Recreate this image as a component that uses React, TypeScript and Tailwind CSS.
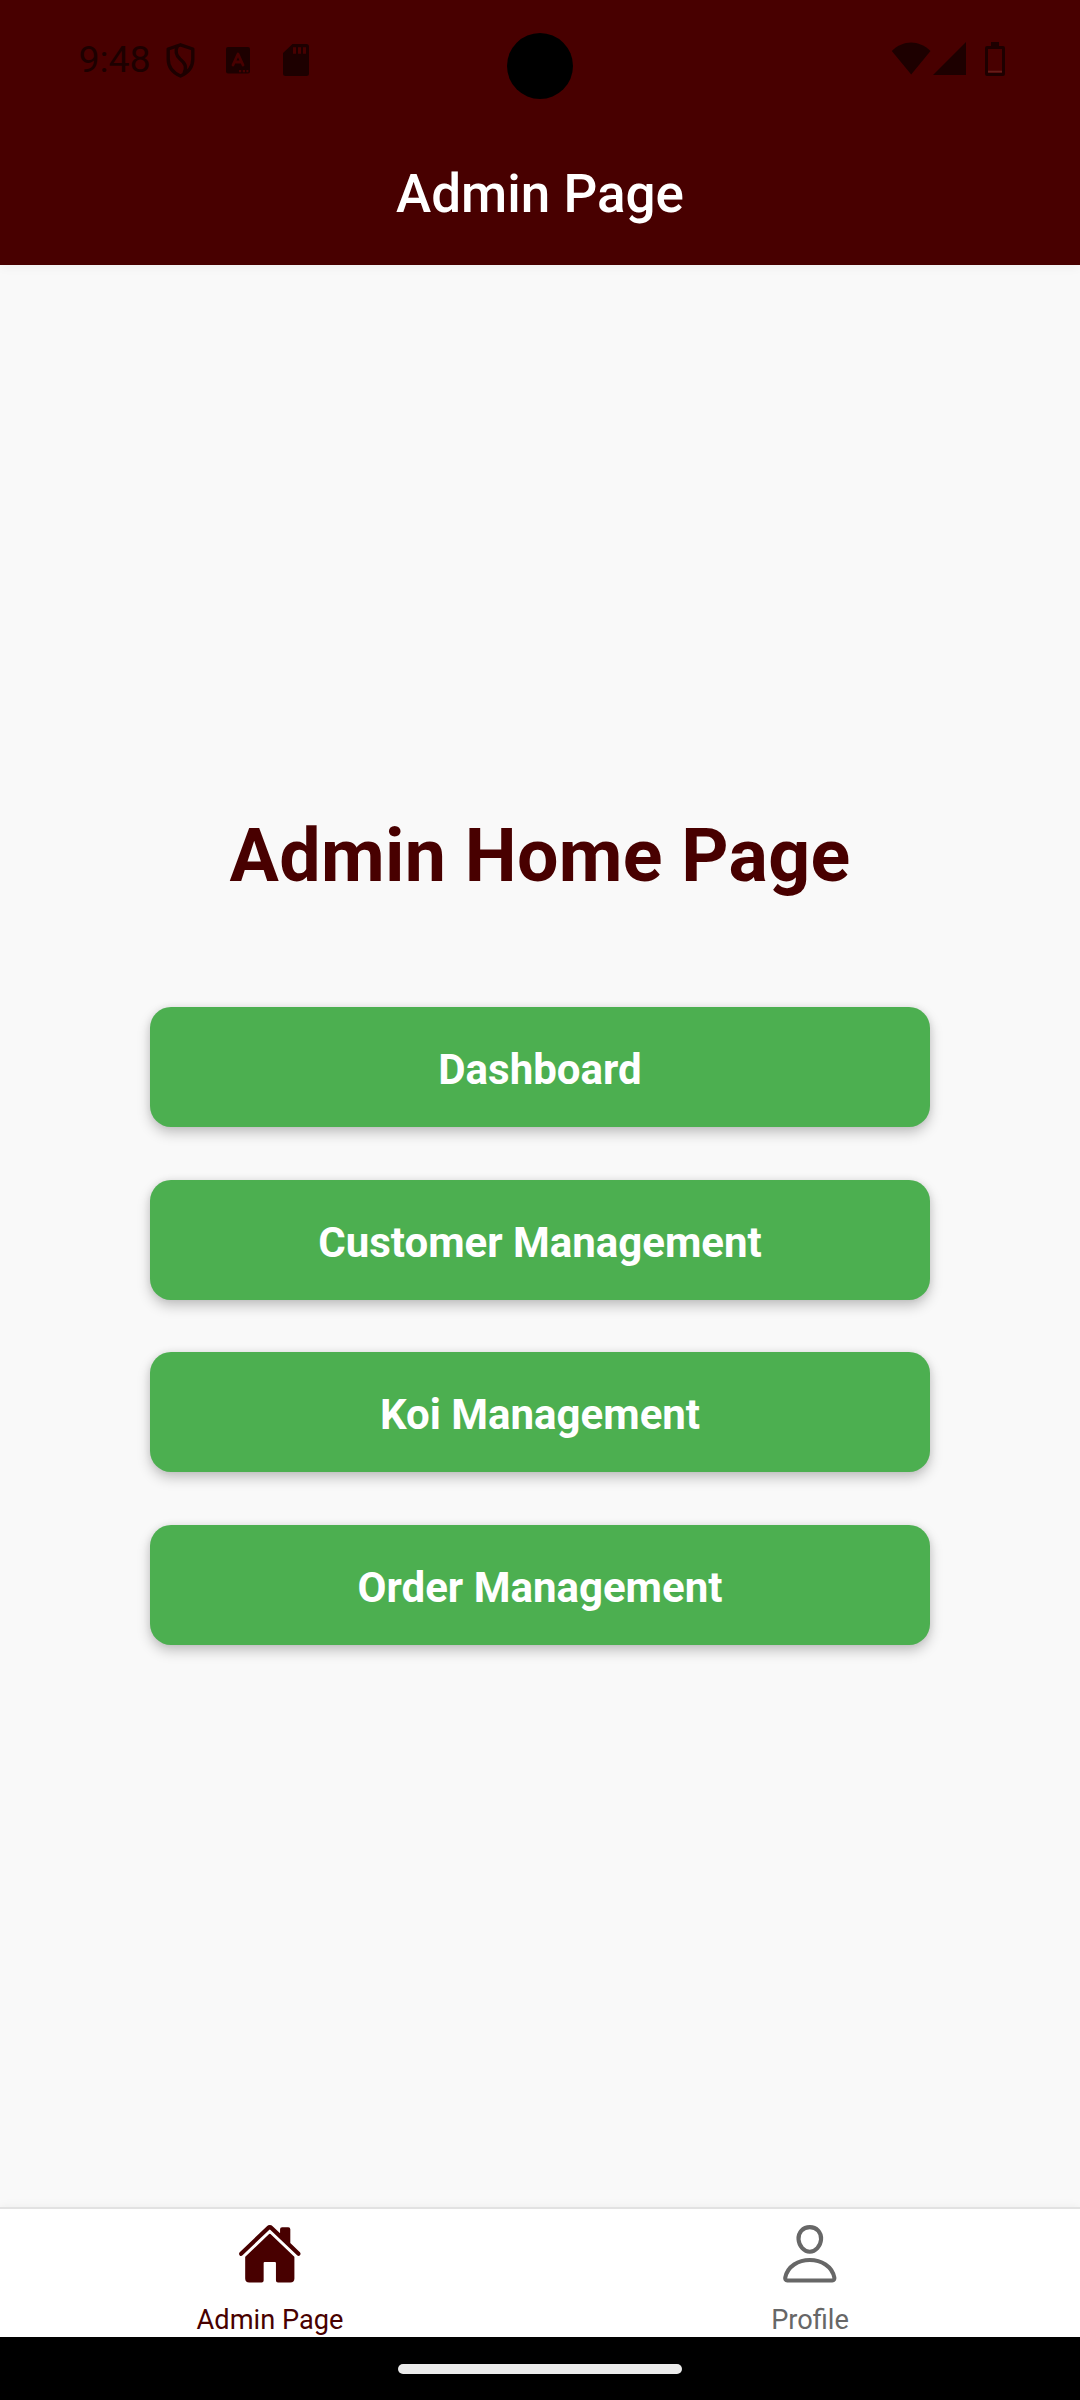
import { IoHome, IoPersonOutline } from "react-icons/io5";

const actions = ["Dashboard", "Customer Management", "Koi Management", "Order Management"];

function StatusBar() {
  return (
    <div className="relative flex h-[118px] w-full items-start justify-between text-[#1d0000]">
      <div className="flex pl-[78.5px]">
        <span className="mt-[37px] block w-[76px] text-[37.5px] leading-[44px] tracking-[-0.1px] whitespace-nowrap">9:48</span>
        <svg className="mt-[42px] ml-[10px] h-[37px] w-[31px]" viewBox="0 0 30 37" fill="none" stroke="currentColor" strokeWidth="3.4">
          <path d="M15 2.8 L2.7 7 V17 C2.7 25 8 31 15 34 C22 31 27.3 25 27.3 17 V7 Z" strokeLinejoin="round" />
          <path d="M12 3.5 C9.5 9 10.5 13.5 14.5 17 C20 21.5 21.5 25 18.5 31.5" />
        </svg>
        <svg className="mt-[46.5px] ml-[30.5px] h-[27px] w-[24px]" viewBox="0 0 24 27">
          <rect width="24" height="26.5" rx="2" fill="currentColor" />
          <path d="M7 18 L12 7 L17 18 M8.7 15 H15.3" fill="none" stroke="#480000" strokeWidth="2.8" strokeLinecap="round" strokeLinejoin="round" />
          <path d="M13 23h2.2v2.2H13zM16.8 23H19v2.2h-2.2zM20.4 23h2v2.2h-2z" fill="#480000" />
        </svg>
        <svg className="mt-[44px] ml-[33px] h-[32px] w-[26px]" viewBox="0 0 26 32">
          <path d="M9.5 0H23.5A2.5 2.5 0 0 1 26 2.5V29.5A2.5 2.5 0 0 1 23.5 32H2.5A2.5 2.5 0 0 1 0 29.5V9Z" fill="currentColor" />
          <path d="M10 3.2h3v6.5h-3zM15 3.2h3v6.5h-3zM20 3.2h3v6.5h-3z" fill="#480000" />
        </svg>
      </div>
      <div className="absolute top-[33px] left-[507px] size-[66px] rounded-full bg-black" />
      <div className="flex pr-[75px]">
        <svg className="mt-[42px] h-[33px] w-[40px]" viewBox="0 0 40 33">
          <path d="M.8 9C12-2.5 28-2.5 39.5 9L20.2 32.6Z" fill="currentColor" />
        </svg>
        <svg className="mt-[42px] ml-[2.5px] h-[33px] w-[33px]" viewBox="0 0 33 33">
          <path d="M33 0V33H0Z" fill="currentColor" />
        </svg>
        <svg className="mt-[42px] ml-[19px] h-[34px] w-[20px]" viewBox="0 0 20 34">
          <path d="M6 0h8v4h4a2 2 0 0 1 2 2v26a2 2 0 0 1-2 2H2a2 2 0 0 1-2-2V6a2 2 0 0 1 2-2h4zM3 7v24h14V7z" fill="currentColor" fillRule="evenodd" />
          <rect x="3" y="28.7" width="14" height="1.8" fill="#651d1a" />
        </svg>
      </div>
    </div>
  );
}

export default function App() {
  return (
    <div className="flex h-[2400px] w-[1080px] flex-col overflow-hidden bg-[#f9f9f9] font-['Roboto',sans-serif]">
      <header className="h-[265px] shrink-0 bg-[#480000] shadow-[0_3px_10px_rgba(0,0,0,0.04)]">
        <StatusBar />
        <h1 className="mt-[45px] text-center text-[53px] leading-[62px] font-medium text-white">Admin Page</h1>
      </header>

      <main className="flex flex-1 flex-col items-center pt-[547px]">
        <h2 className="text-[73.5px] leading-[88px] font-bold tracking-[0.3px] text-[#480000]">Admin Home Page</h2>
        <div className="mt-[107px] flex w-[780px] flex-col gap-[52.6px]">
          {actions.map((label) => (
            <button
              key={label}
              className="flex h-[120px] items-center justify-center rounded-[21px] bg-[#4caf50] pt-[6px] text-[42px] leading-[50px] font-bold text-white shadow-[0_6px_13px_rgba(0,0,0,0.22),0_0_7px_rgba(0,0,0,0.08)]"
            >
              {label}
            </button>
          ))}
        </div>
      </main>

      <nav className="grid h-[130px] shrink-0 grid-cols-2 border-t-2 border-[#e2e2e2] bg-white shadow-[0_0_10px_rgba(0,0,0,0.06)]">
        <a className="flex flex-col items-center pt-[12px] text-[#480000]">
          <IoHome className="size-[65.6px]" />
          <span className="mt-[18px] text-[27.2px] leading-[31px]">Admin Page</span>
        </a>
        <a className="flex flex-col items-center pt-[12px] text-[#676767]">
          <IoPersonOutline className="size-[65.6px]" />
          <span className="mt-[18px] text-[27.2px] leading-[31px]">Profile</span>
        </a>
      </nav>

      <div className="flex h-[63px] shrink-0 items-start justify-center bg-black pt-[27px]">
        <div className="h-[10px] w-[284px] rounded-full bg-[#ebebeb]" />
      </div>
    </div>
  );
}
